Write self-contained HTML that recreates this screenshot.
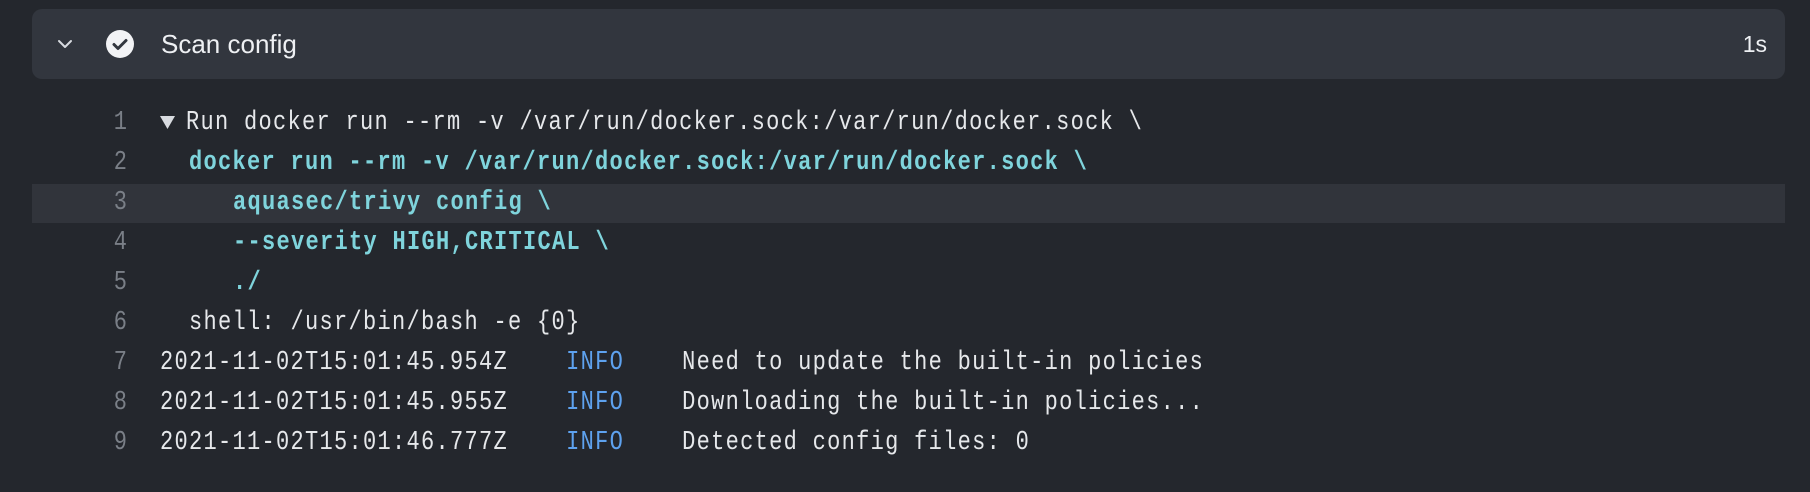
<!DOCTYPE html>
<html><head><meta charset="utf-8"><style>
html,body{margin:0;padding:0;width:1810px;height:492px;background:#24272d;overflow:hidden}
.hdr{position:absolute;left:32px;top:9px;width:1753px;height:70px;background:#32363e;border-radius:10px}
.hdr .t{position:absolute;left:129px;top:0;font:26px "Liberation Sans",sans-serif;line-height:70px;color:#eef0f3}
.hdr .d{position:absolute;right:18px;top:0;font:23px "Liberation Sans",sans-serif;line-height:70px;color:#eef0f3}
.hl{position:absolute;left:32px;top:184px;width:1753px;height:39px;background:#31343b}
.ln{position:absolute;height:40px;line-height:40px;font-family:"Liberation Mono",monospace;font-size:22px;letter-spacing:1.3px;white-space:pre;color:#e6e8eb;transform:scaleY(1.22);transform-origin:0 50%}
.n{position:absolute;width:60px;left:67px;text-align:right;color:#7a7f87;height:40px;line-height:40px;font-family:"Liberation Mono",monospace;font-size:22px;transform:scaleY(1.22)}
.c{color:#7fd4dc;font-weight:bold}
.b{color:#5ea2ef}
</style></head><body>
<div class="hdr">
<svg style="position:absolute;left:24px;top:26px" width="18" height="18" viewBox="0 0 18 18"><path d="M3 6l6 6 6-6" fill="none" stroke="#d8dbe0" stroke-width="2" stroke-linecap="round" stroke-linejoin="round"/></svg>
<svg style="position:absolute;left:73px;top:20px" width="30" height="30" viewBox="0 0 30 30"><circle cx="15" cy="15" r="14" fill="#f2f3f5"/><path d="M9 15.5l4 4 8-8" fill="none" stroke="#32363e" stroke-width="3" stroke-linecap="round" stroke-linejoin="round"/></svg>
<div class="t">Scan config</div>
<div class="d">1s</div>
</div>
<div class="hl"></div>

<div class="n" style="top:103px">1</div>
<svg style="position:absolute;left:160px;top:116px" width="15" height="13" viewBox="0 0 15 13"><path d="M0 0h15L7.5 13z" fill="#d8dbe0"/></svg>
<div class="ln" style="left:186px;top:103px">Run docker run --rm -v /var/run/docker.sock:/var/run/docker.sock \</div>

<div class="n" style="top:143px">2</div>
<div class="ln c" style="left:189px;top:143px">docker run --rm -v /var/run/docker.sock:/var/run/docker.sock \</div>

<div class="n" style="top:183px">3</div>
<div class="ln c" style="left:233px;top:183px">aquasec/trivy config \</div>

<div class="n" style="top:223px">4</div>
<div class="ln c" style="left:233px;top:223px">--severity HIGH,CRITICAL \</div>

<div class="n" style="top:263px">5</div>
<div class="ln c" style="left:233px;top:263px">./</div>

<div class="n" style="top:303px">6</div>
<div class="ln" style="left:189px;top:303px">shell: /usr/bin/bash -e {0}</div>

<div class="n" style="top:343px">7</div>
<div class="ln" style="left:160px;top:343px">2021-11-02T15:01:45.954Z    <span class="b">INFO</span>    Need to update the built-in policies</div>

<div class="n" style="top:383px">8</div>
<div class="ln" style="left:160px;top:383px">2021-11-02T15:01:45.955Z    <span class="b">INFO</span>    Downloading the built-in policies...</div>

<div class="n" style="top:423px">9</div>
<div class="ln" style="left:160px;top:423px">2021-11-02T15:01:46.777Z    <span class="b">INFO</span>    Detected config files: 0</div>
</body></html>
